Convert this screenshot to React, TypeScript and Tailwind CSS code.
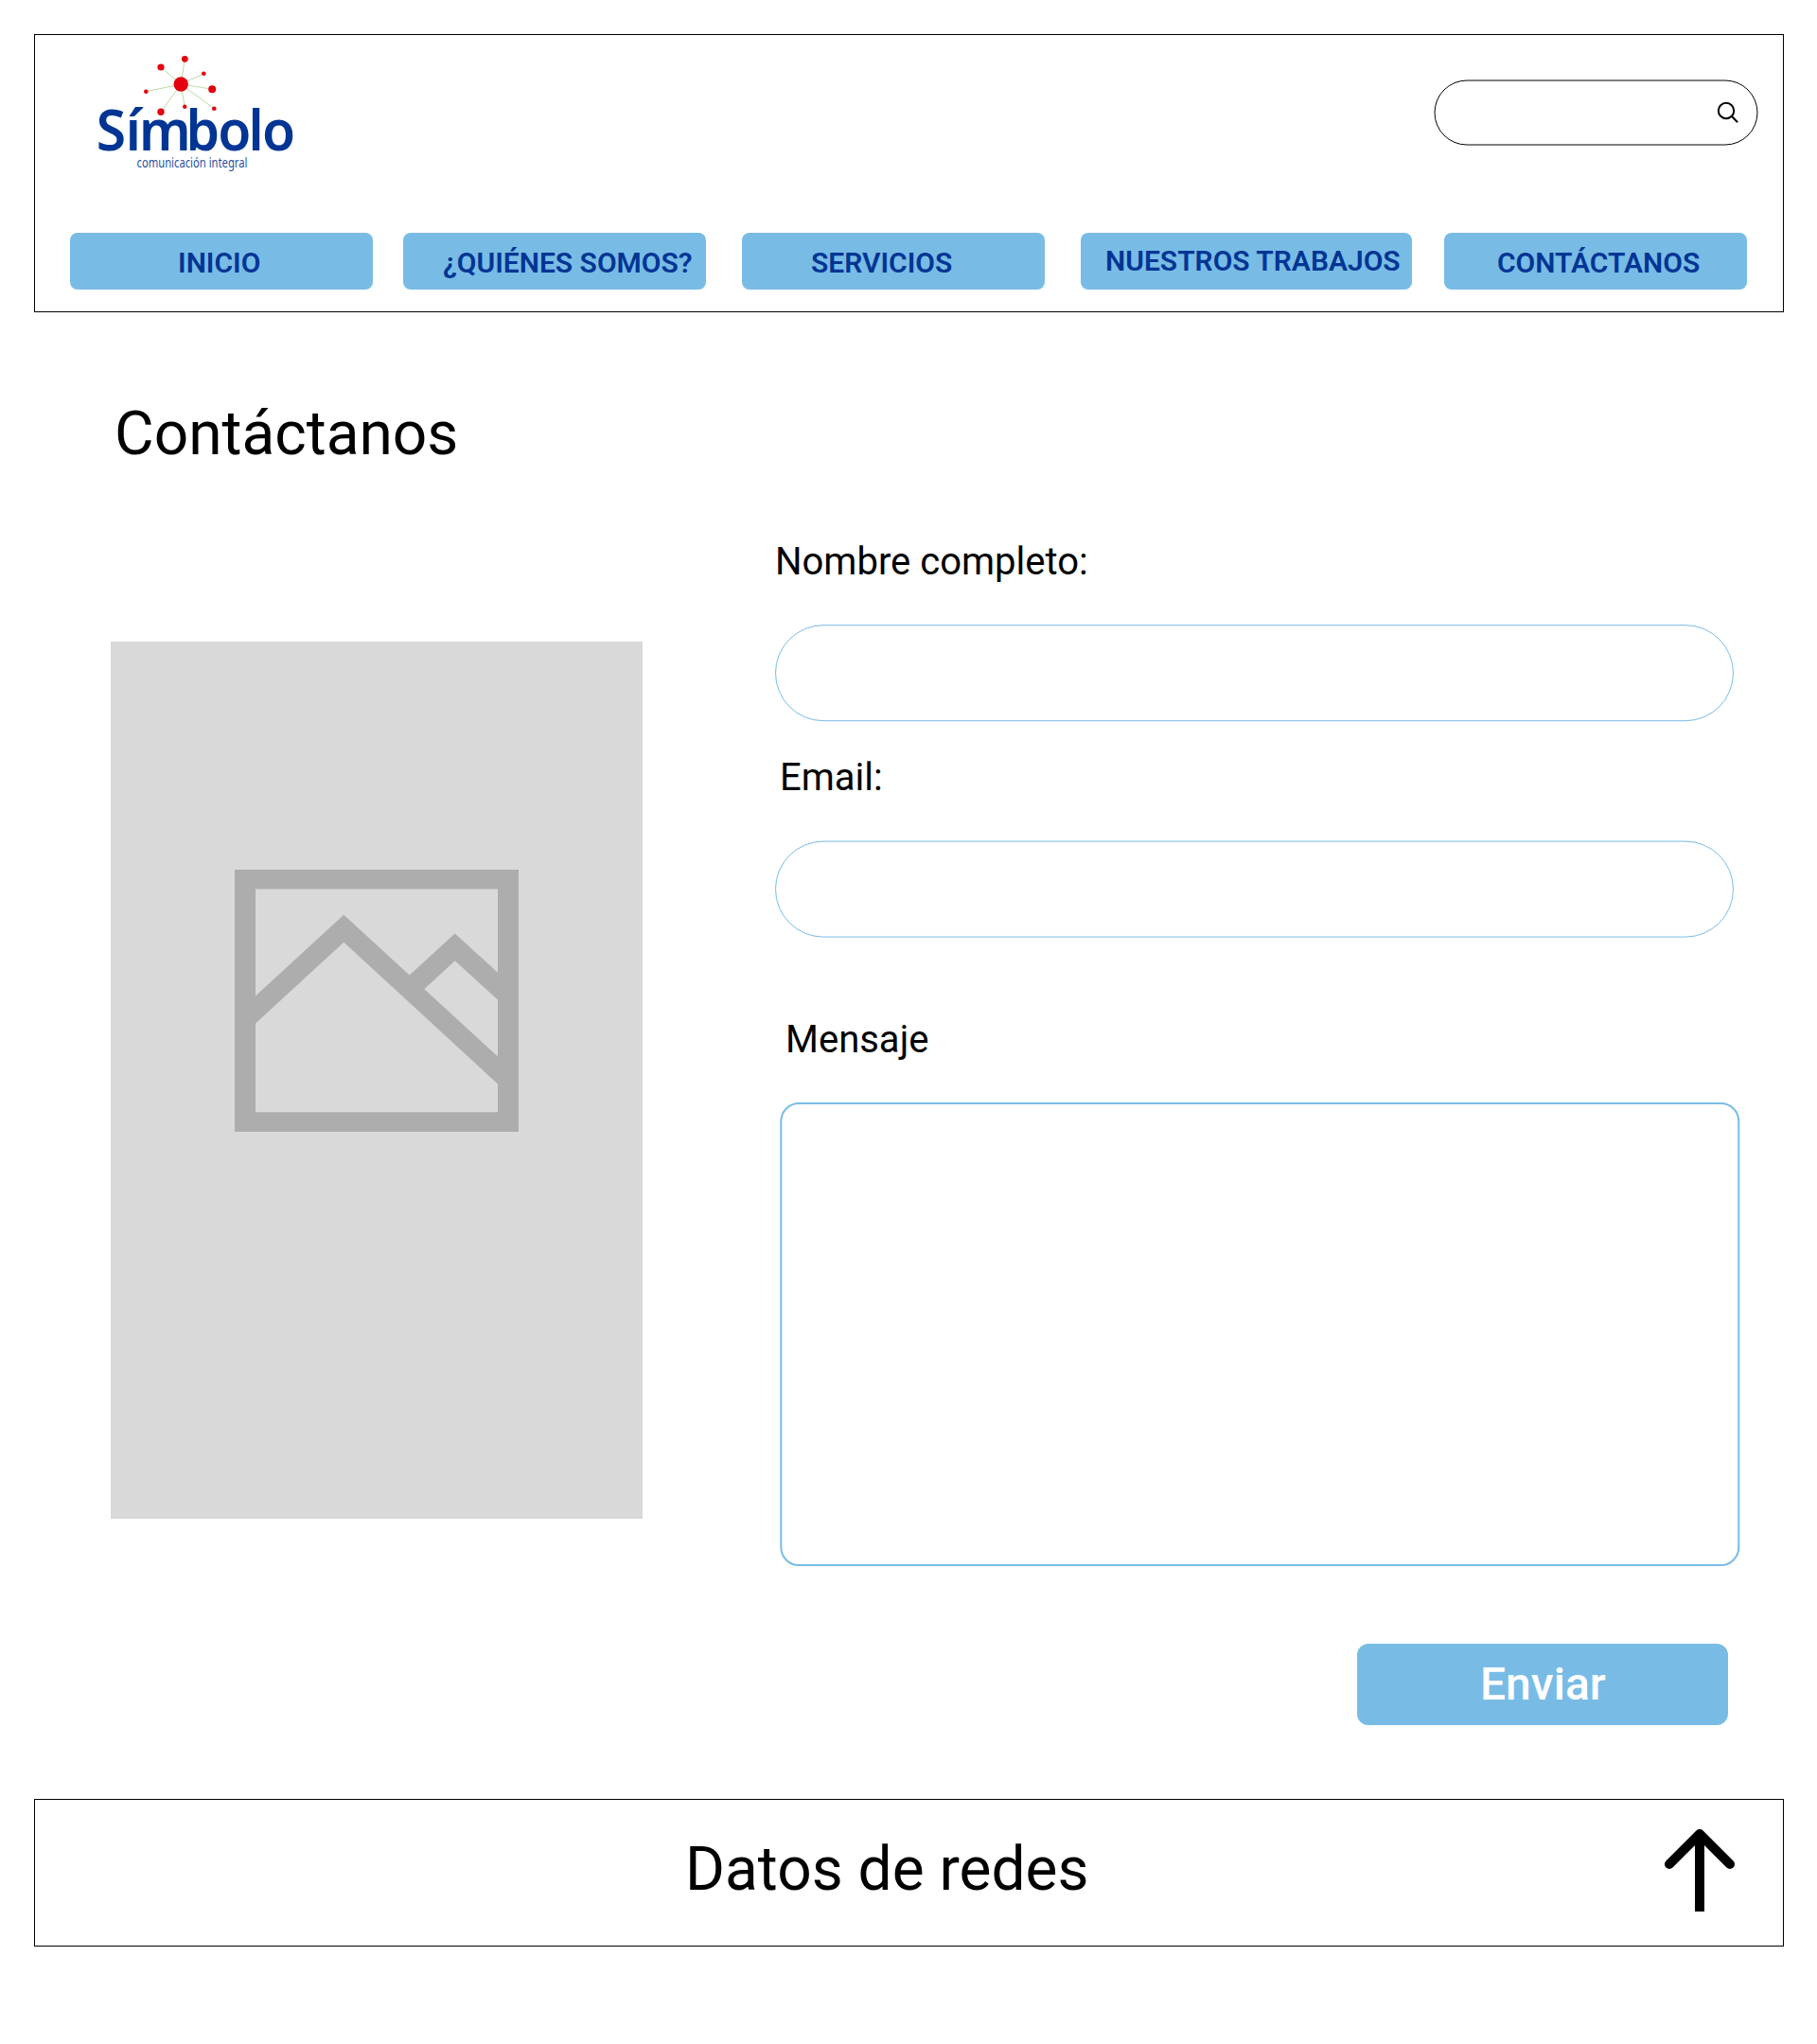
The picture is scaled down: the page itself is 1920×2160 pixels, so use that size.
const nav = [
  { label: 'INICIO', box: 'w-[320px] pt-[14px] pl-[114px]' },
  { label: '¿QUIÉNES SOMOS?', box: 'ml-8 w-[320px] pt-[14px] pl-[42px]' },
  { label: 'SERVICIOS', box: 'ml-[38px] w-[320px] pt-[14px] pl-[73px]' },
  { label: 'NUESTROS TRABAJOS', box: 'ml-[38px] w-[350px] pt-[12px] pl-[26px]' },
  { label: 'CONTÁCTANOS', box: 'ml-[34px] w-[320px] pt-[14px] pl-[56px]' },
];

const nodes = [
  [133, 34, 3.6],
  [158.3, 25.3, 3.4],
  [178.3, 40.8, 2.3],
  [117.3, 59.8, 2.3],
  [187.2, 57.2, 4],
  [133, 81.3, 3.7],
  [158.2, 75.8, 2.2],
  [189.3, 77.8, 2.3],
];

function Logo() {
  return (
    <svg className="block" width="320" height="190" viewBox="0 0 320 190">
      <g fill="#003594" fontFamily="'Noto Sans', sans-serif">
        <text x="68.2 100.7 115.7 168 203.5 237.5 252.7" y="122" fontSize="60" fontWeight="600" transform="scale(0.95 1)">
          Símbolo
        </text>
        <text x="107.5" y="139.8" fontSize="14" textLength="117" lengthAdjust="spacingAndGlyphs" fillOpacity="0.9">
          comunicación integral
        </text>
      </g>
      <g stroke="#b9dda0" strokeWidth="1">
        {nodes.map(([x, y]) => (
          <line key={`${x}-${y}`} x1="154.2" y1="52" x2={x} y2={y} />
        ))}
      </g>
      <g fill="#e3000f">
        <circle cx="154.2" cy="52" r="7.7" />
        {nodes.map(([x, y, r]) => (
          <circle key={`${x}-${y}`} cx={x} cy={y} r={r} />
        ))}
      </g>
    </svg>
  );
}

export default function App() {
  return (
    <div className="h-[2160px] w-[1920px] overflow-hidden bg-white px-9 pt-9 font-[Roboto,sans-serif] text-black">
      <header className="h-[294px] w-[1849px] border border-black">
        <div className="flex h-[209px] items-start justify-between pr-[26px]">
          <Logo />
          <div className="mt-[47px] flex h-[69px] w-[342px] translate-x-[-0.5px] translate-y-[0.5px] rounded-full border border-black">
            <svg className="mt-[20px] ml-[294px]" width="30" height="30" viewBox="0 0 30 30" fill="none" stroke="#000" strokeWidth="2">
              <circle cx="13.5" cy="11.5" r="8.2" />
              <path d="M19.3 17.3L25.6 23.7" />
            </svg>
          </div>
        </div>
        <nav className="flex pl-[37px]">
          {nav.map((n) => (
            <a key={n.label} className={`h-[60px] shrink-0 rounded-lg bg-[#78bce6] text-[30px] leading-[35px] font-semibold whitespace-nowrap text-[#003594] ${n.box}`}>
              {n.label}
            </a>
          ))}
        </nav>
      </header>

      <main className="flex h-[1571px]">
        <section className="ml-[81px] w-[562px]">
          <h1 className="mt-[91px] ml-1 text-[64px] leading-[75px]">Contáctanos</h1>
          <div className="mt-[182px] h-[927px] bg-[#d9d9d9] pt-[241px] pl-[131px]">
            <svg className="block" width="300" height="277" viewBox="0 0 300 277" fill="#adadad">
              <path
                fillRule="evenodd"
                d="M0 0H300V277H0ZM22 20.5V133.5L115.3 47.7L184.7 111.5L232.7 67.5L278 108.7V20.5ZM278 137.5L232.7 96.3L200.3 126.3L278 197.5ZM278 226.5L115.3 76.7L22 162.5V256.3H278Z"
              />
            </svg>
          </div>
        </section>

        <form className="ml-[140px] w-[1019px]">
          <label className="mt-[240px] block text-[40px] leading-[47px]">Nombre completo:</label>
          <div className="mt-[43px] h-[102px] w-[1013px] translate-y-[0.2px] rounded-full border border-[#78bce6]" />
          <label className="mt-[36px] ml-[5px] block text-[40px] leading-[47px]">Email:</label>
          <div className="mt-[43px] h-[102px] w-[1013px] translate-y-[0.6px] rounded-full border border-[#78bce6]" />
          <label className="mt-[85px] ml-[11px] block text-[40px] leading-[47px]">Mensaje</label>
          <div className="mt-[43px] ml-[5px] h-[490px] w-[1014px] translate-x-[0.3px] rounded-[20px] border-2 border-[#78bce6]" />
          <button type="button" className="mt-[82px] ml-[615px] flex h-[86px] w-[392px] rounded-xl bg-[#78bce6] pt-[15px] pl-[130px] text-[48px] leading-[56px] font-medium text-white">
            Enviar
          </button>
        </form>
      </main>

      <footer className="flex h-[156px] w-[1849px] items-start justify-between border border-black pr-[46px]">
        <p className="mt-[36px] ml-[687px] text-[64px] leading-[75px]">Datos de redes</p>
        <svg className="mt-[28px]" width="84" height="96" viewBox="0 0 84 96" fill="none" stroke="#000" strokeWidth="10">
          <path d="M10 40L42 8L74 40" strokeLinecap="round" strokeLinejoin="round" />
          <path d="M42 8V90" />
        </svg>
      </footer>
    </div>
  );
}
